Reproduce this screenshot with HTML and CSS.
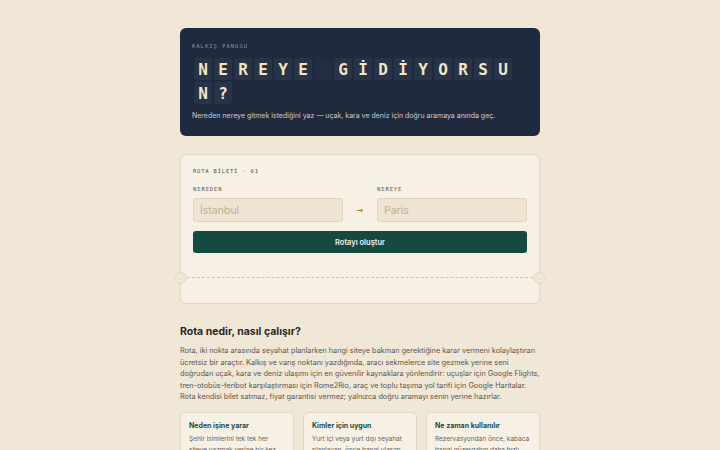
FILE: index.html
```html
<!DOCTYPE html>
<html lang="tr">
<head>
<meta charset="utf-8">
<title>Rota</title>
<link rel="stylesheet" href="styles.css">
</head>
<body>
<main class="page">
  <section class="board">
    <div class="eyebrow">KALKIŞ PANOSU</div>
    <h1 class="flaps">
      <span class="row">
        <span class="cell">N</span><span class="cell">E</span><span class="cell">R</span><span class="cell">E</span><span class="cell">Y</span><span class="cell">E</span><span class="cell blank"></span><span class="cell">G</span><span class="cell">İ</span><span class="cell">D</span><span class="cell">İ</span><span class="cell">Y</span><span class="cell">O</span><span class="cell">R</span><span class="cell">S</span><span class="cell">U</span>
      </span>
      <span class="row">
        <span class="cell">N</span><span class="cell">?</span>
      </span>
    </h1>
    <p class="lead">Nereden nereye gitmek istediğini yaz — uçak, kara ve deniz için doğru aramaya anında geç.</p>
  </section>

  <section class="ticket">
    <div class="ticket-main">
      <div class="eyebrow dark">ROTA BİLETİ · 01</div>
      <div class="fields">
        <label class="field">
          <span class="label">NEREDEN</span>
          <input class="input" type="text" placeholder="İstanbul">
        </label>
        <span class="arrow">→</span>
        <label class="field">
          <span class="label">NEREYE</span>
          <input class="input" type="text" placeholder="Paris">
        </label>
      </div>
      <button class="btn" type="button">Rotayı oluştur</button>
    </div>
    <div class="perf"></div>
    <div class="ticket-stub"></div>
  </section>

  <section class="about">
    <h2>Rota nedir, nasıl çalışır?</h2>
    <p>Rota, iki nokta arasında seyahat planlarken hangi siteye bakman gerektiğine karar vermeni kolaylaştıran ücretsiz bir araçtır. Kalkış ve varış noktanı yazdığında, aracı sekmelerce site gezmek yerine seni doğrudan uçak, kara ve deniz ulaşımı için en güvenilir kaynaklara yönlendirir: uçuşlar için Google Flights, tren-otobüs-feribot karşılaştırması için Rome2Rio, araç ve toplu taşıma yol tarifi için Google Haritalar. Rota kendisi bilet satmaz, fiyat garantisi vermez; yalnızca doğru aramayı senin yerine hazırlar.</p>
  </section>

  <section class="cards">
    <article class="card">
      <h3>Neden işine yarar</h3>
      <p>Şehir isimlerini tek tek her siteye yazmak yerine bir kez yazarsın, gerisini Rota halleder.</p>
    </article>
    <article class="card">
      <h3>Kimler için uygun</h3>
      <p>Yurt içi veya yurt dışı seyahat planlayan, önce hangi ulaşım türüne bakacağını bilmeyen herkes.</p>
    </article>
    <article class="card">
      <h3>Ne zaman kullanılır</h3>
      <p>Rezervasyondan önce, kabaca hangi güzergahın daha hızlı olduğunu görmek istediğinde.</p>
    </article>
  </section>
</main>
</body>
</html>
```
FILE: styles.css
```css
* { box-sizing: border-box; }

html, body { margin: 0; padding: 0; }

body {
  background-color: #f0e7d7;
  background-image: radial-gradient(rgba(160, 130, 90, 0.08) 0.6px, transparent 0.8px);
  background-size: 8px 8px;
  font-family: Inter, "Noto Sans", sans-serif;
  color: #2b2926;
  overflow: hidden;
}

.page {
  width: 360px;
  margin: 28px auto 0;
}

/* ---------- Board ---------- */
.board {
  background: #1f2a3e;
  border-radius: 6px;
  padding: 14px 12px 15px;
  color: #d6d9df;
}

.eyebrow {
  font-family: "DejaVu Sans Mono", "Liberation Mono", monospace;
  font-size: 5.5px;
  letter-spacing: 1px;
  color: #8d95a6;
  line-height: 8px;
}

.eyebrow.dark { color: #4d4a44; letter-spacing: 0.8px; }

.flaps {
  margin: 8px 0 0;
  display: flex;
  flex-direction: column;
  gap: 2px;
  font-weight: 400;
}

.row {
  display: flex;
  gap: 2px;
  padding-left: 2px;
}

.cell {
  width: 18px;
  height: 22px;
  display: flex;
  align-items: center;
  justify-content: center;
  background: #273349;
  border-radius: 2px;
  font-family: "DejaVu Sans Mono", "Liberation Mono", monospace;
  font-weight: 700;
  font-size: 16px;
  color: #f3e7bf;
}

.cell.blank { background: #222d43; }

.lead {
  margin: 7px 0 0;
  font-size: 7px;
  line-height: 10px;
  color: #c9cdd6;
}

/* ---------- Ticket ---------- */
.ticket {
  position: relative;
  margin-top: 18px;
  background: #f7f1e5;
  border: 1px solid #e3d8c5;
  border-radius: 6px;
}

.ticket-main {
  padding: 12px 12px 24px;
}

.fields {
  margin-top: 11px;
  display: grid;
  grid-template-columns: 1fr 34px 1fr;
  align-items: end;
}

.field {
  display: flex;
  flex-direction: column;
  gap: 6px;
}

.label {
  font-family: "DejaVu Sans Mono", "Liberation Mono", monospace;
  font-size: 5.5px;
  letter-spacing: 0.9px;
  color: #5a564f;
  line-height: 6px;
}

.input {
  height: 24px;
  width: 100%;
  background: #efe4d2;
  border: 1px solid #e0d4be;
  border-radius: 3px;
  padding: 0 6px;
  font-family: Inter, "Noto Sans", sans-serif;
  font-size: 10.5px;
  color: #2b2926;
  outline: none;
}

.input::placeholder { color: #bcae95; }

.arrow {
  height: 24px;
  display: flex;
  align-items: center;
  justify-content: center;
  font-family: "DejaVu Sans", sans-serif;
  font-size: 8px;
  font-weight: 700;
  color: #b27a28;
}

.btn {
  margin-top: 9px;
  width: 100%;
  height: 22px;
  border: 0;
  border-radius: 3px;
  background: #164a40;
  color: #eef0e8;
  font-family: Inter, "Noto Sans", sans-serif;
  font-size: 7.5px;
  font-weight: 600;
}

.perf {
  position: relative;
  border-top: 1px dashed #cfc3ae;
  margin: 0 6px;
}

.perf::before,
.perf::after {
  content: "";
  position: absolute;
  top: -6px;
  width: 10px;
  height: 10px;
  border-radius: 50%;
  background: #f0e7d7;
  border: 1px solid #e3d8c5;
}

.perf::before { left: -12px; }
.perf::after { right: -12px; }

.ticket-stub { height: 25px; }

/* ---------- About ---------- */
.about { margin-top: 21px; }

.about h2 {
  margin: 0;
  font-size: 10.5px;
  font-weight: 700;
  color: #2a2825;
  line-height: 14px;
}

.about p {
  margin: 6px 0 0;
  font-size: 7.3px;
  line-height: 11.6px;
  color: #5b564e;
}

/* ---------- Cards ---------- */
.cards {
  margin-top: 9px;
  display: grid;
  grid-template-columns: repeat(3, 1fr);
  gap: 9px;
}

.card {
  background: #f7f1e5;
  border: 1px solid #e3d8c5;
  border-radius: 5px;
  padding: 8px 8px 8px;
}

.card h3 {
  margin: 0;
  font-size: 7px;
  font-weight: 700;
  color: #1f4a3d;
  line-height: 10px;
}

.card p {
  margin: 3px 0 0;
  font-size: 6.5px;
  line-height: 11px;
  color: #68625a;
}
```
